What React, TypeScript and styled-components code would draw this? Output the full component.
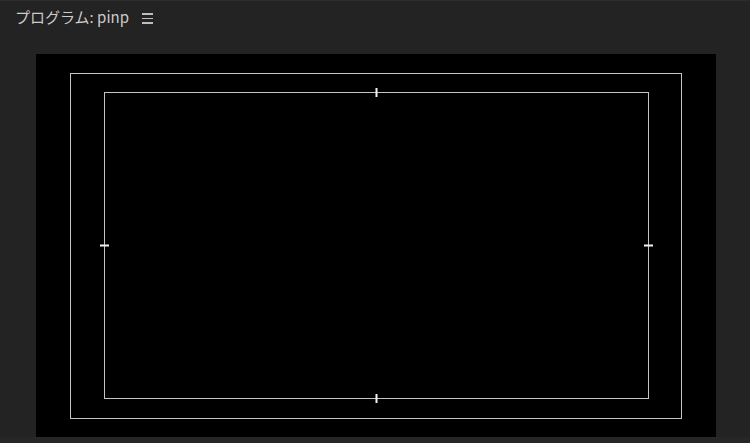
import styled, { createGlobalStyle } from "styled-components";

const GlobalStyle = createGlobalStyle`
  html, body {
    margin: 0;
    padding: 0;
    background: #232323;
  }
  body {
    font-family: "Noto Sans CJK JP", "Noto Sans", sans-serif;
  }
`;

const Panel = styled.div`
  width: 750px;
  height: 443px;
  background: #232323;
  border-top: 1px solid #2c2c2c;
  box-sizing: border-box;
  display: flex;
  flex-direction: column;
  overflow: hidden;
`;

const Header = styled.div`
  height: 53px;
  display: flex;
  align-items: flex-start;
  padding: 4px 0 0 15px;
  box-sizing: border-box;
  gap: 13px;
`;

const Title = styled.span`
  color: #cccccc;
  font-size: 15px;
  line-height: 24px;
`;

const Menu = styled.span`
  display: flex;
  flex-direction: column;
  gap: 3px;
  margin-top: 8px;
  width: 11px;

  span {
    height: 1.5px;
    background: #bdbdbd;
  }
`;

const Body = styled.div`
  flex: 1;
  display: flex;
  padding: 0 34px 0 36px;
`;

const Viewer = styled.div`
  width: 680px;
  height: 383px;
  background: #000;
`;

const Footer = styled.div`
  height: 6px;
  background: #262626;
`;

const Guides = () => (
  <svg width="680" height="383" viewBox="0 0 680 383">
    <g fill="none" stroke="#c4c4c4" strokeWidth="1">
      <rect x="34.5" y="19.5" width="611" height="345" />
      <rect x="68.5" y="38.5" width="544" height="306" />
    </g>
    <g fill="#f2f2f2">
      <rect x="339.5" y="34" width="2" height="9" />
      <rect x="339.5" y="340" width="2" height="9" />
      <rect x="64" y="190.5" width="9" height="2" />
      <rect x="608" y="190.5" width="9" height="2" />
    </g>
  </svg>
);

const App = () => {
  return (
    <>
      <GlobalStyle />
      <Panel>
        <Header>
          <Title>プログラム: pinp</Title>
          <Menu>
            <span />
            <span />
            <span />
          </Menu>
        </Header>
        <Body>
          <Viewer>
            <Guides />
          </Viewer>
        </Body>
        <Footer />
      </Panel>
    </>
  );
};

export default App;
